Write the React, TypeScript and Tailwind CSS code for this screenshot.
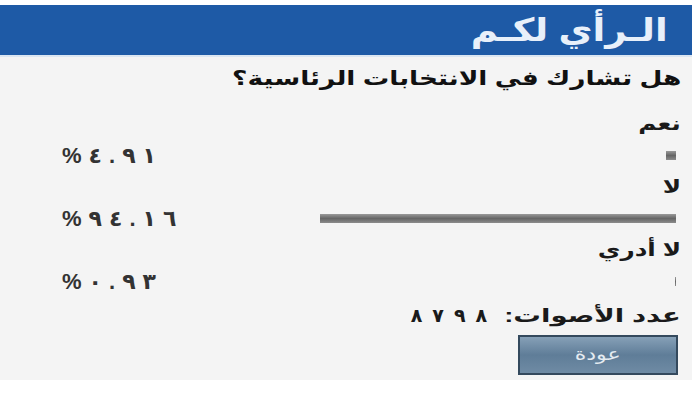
import React from "react";

type Option = {
  label: string;
  percent: string;
  width: number;
};

const options: Option[] = [
  { label: "نعم", percent: "%٤.٩١", width: 10 },
  { label: "لا", percent: "%٩٤.١٦", width: 356 },
  { label: "لا أدري", percent: "%٠.٩٣", width: 1 },
];

// spread characters apart (letter-spacing is ignored for Arabic digits)
function Spaced({ text, className }: { text: string; className: string }) {
  return (
    <div dir="ltr" className={`flex items-center ${className}`}>
      {Array.from(text).map((ch, i) => (
        <span key={i}>{ch}</span>
      ))}
    </div>
  );
}

function ResultRow({ option }: { option: Option }) {
  return (
    <div>
      <div className="h-[30px] flex items-center">
        <span className="inline-block text-[19px] font-bold text-[#1a1a1a] scale-x-[1.3] origin-right">
          {option.label}
        </span>
      </div>
      <div className="h-[33px] flex items-center justify-between">
        <div
          className="h-[9px] bg-gradient-to-b from-[#9a9a9a] via-[#666] to-[#8c8c8c] mr-[5px]"
          style={{ width: option.width }}
        />
        <Spaced
          text={option.percent}
          className="gap-[7px] text-[22px] font-bold text-[#333] ml-[62px]"
        />
      </div>
    </div>
  );
}

export default function App() {
  return (
    <div
      className="w-[700px] h-[400px] bg-white overflow-hidden pt-[5px]"
      style={{ fontFamily: '"Liberation Sans", "DejaVu Sans", sans-serif' }}
    >
      <div dir="rtl" className="w-[692px]">
        <div className="h-[52px] bg-[#1e5aa6] flex items-center pr-[24px] border-b-2 border-[#dbe6f2]">
          <span className="inline-block text-[32px] font-bold text-[#e8f0fa] leading-none scale-x-[1.16] origin-right">
            الـرأي لكـم
          </span>
        </div>
        <div className="h-[323px] bg-[#f4f4f4] pr-[11px]">
          <div className="h-[42px] flex items-center">
            <span className="inline-block text-[20px] font-bold text-[#111] scale-x-[1.32] origin-right">
              هل تشارك في الانتخابات الرئاسية؟
            </span>
          </div>
          <div className="mt-[10px]">
            {options.map((o) => (
              <ResultRow key={o.label} option={o} />
            ))}
          </div>
          <div className="h-[36px] flex items-center text-[#1a1a1a] font-bold">
            <span className="inline-block text-[19px] scale-x-[1.45] origin-right">عدد الأصوات:</span>
            <Spaced text="٨٧٩٨" className="gap-[10px] text-[19px] mr-[72px]" />
          </div>
          <button className="mt-[1px] mr-[3px] w-[160px] h-[40px] border-2 border-[#34495d] bg-gradient-to-b from-[#86a0b7] via-[#5f7d98] to-[#6f8ba4] text-[#e4ebf1] text-[17px]">
            <span className="inline-block scale-x-[1.3]">عودة</span>
          </button>
        </div>
      </div>
    </div>
  );
}
